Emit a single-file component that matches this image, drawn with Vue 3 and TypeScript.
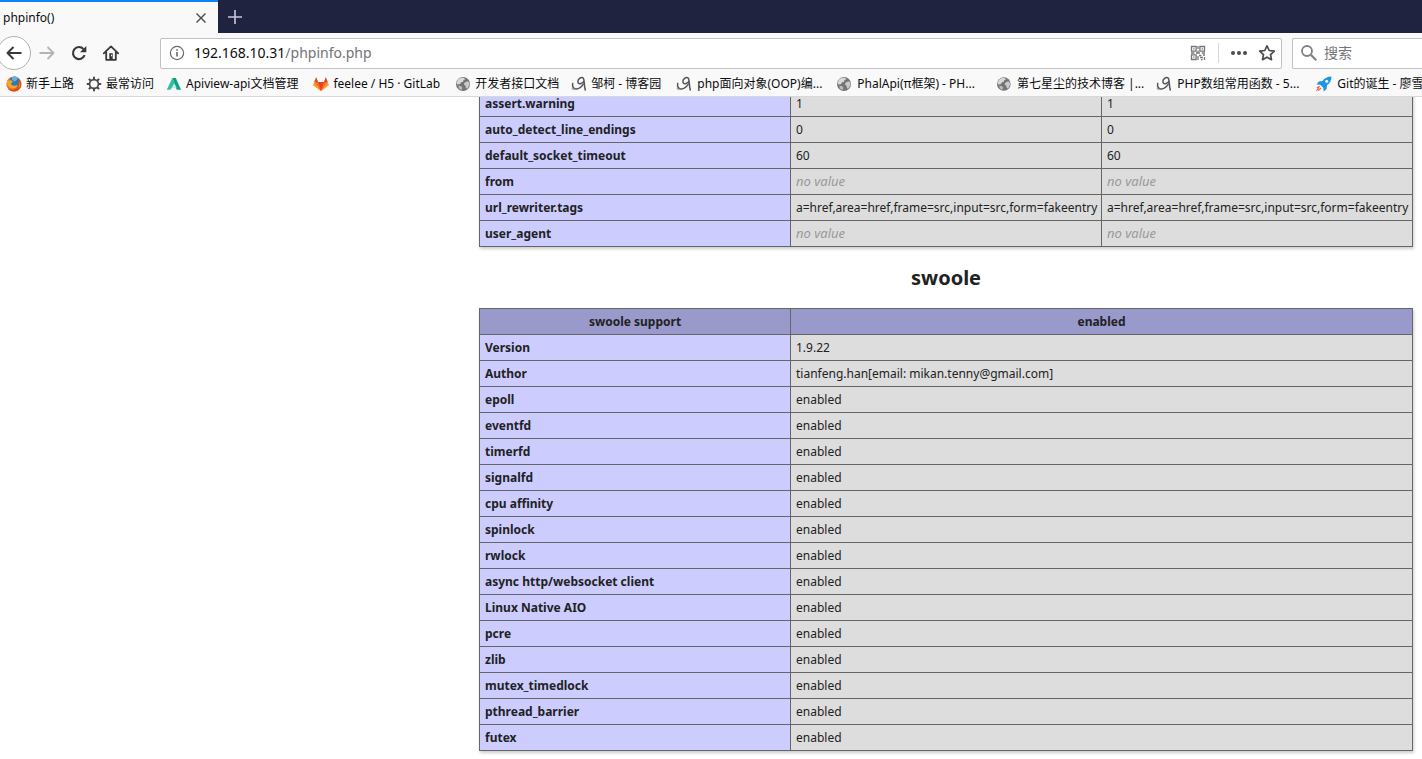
<script setup lang="ts">
interface Bookmark {
  icon: string
  label: string
  size?: string
}

const bookmarks: Bookmark[] = [
  { icon: 'firefox', label: '新手上路' },
  { icon: 'gear', label: '最常访问' },
  { icon: 'apiview', label: 'Apiview-api文档管理', size: 'mixed' },
  { icon: 'gitlab', label: 'feelee / H5 · GitLab', size: 'mixed' },
  { icon: 'globe', label: '开发者接口文档' },
  { icon: 'cnblogs', label: '邹柯 - 博客园', size: 'mixed' },
  { icon: 'cnblogs', label: 'php面向对象(OOP)编...', size: 'capped' },
  { icon: 'globe', label: 'PhalApi(π框架) - PH...', size: 'capped' },
  { icon: 'globe', label: '第七星尘的技术博客 |...', size: 'capped' },
  { icon: 'cnblogs', label: 'PHP数组常用函数 - 5...', size: 'capped' },
  { icon: 'rocket', label: 'Git的诞生 - 廖雪峰', size: 'capped' },
]

const tags = 'a=href,area=href,frame=src,input=src,form=fakeentry'

const directives: { name: string; value: string }[] = [
  { name: 'assert.warning', value: '1' },
  { name: 'auto_detect_line_endings', value: '0' },
  { name: 'default_socket_timeout', value: '60' },
  { name: 'from', value: '' },
  { name: 'url_rewriter.tags', value: tags },
  { name: 'user_agent', value: '' },
]

const features = [
  'epoll', 'eventfd', 'timerfd', 'signalfd', 'cpu affinity', 'spinlock', 'rwlock',
  'async http/websocket client', 'Linux Native AIO', 'pcre', 'zlib',
  'mutex_timedlock', 'pthread_barrier', 'futex',
]

const swoole: [string, string][] = [
  ['Version', '1.9.22'],
  ['Author', 'tianfeng.han[email: mikan.tenny@gmail.com]'],
  ...features.map((f): [string, string] => [f, 'enabled']),
]
</script>

<template>
  <div class="browser">
    <header class="chrome">
      <div class="tabs">
        <div class="tab">
          <span class="tab-title">phpinfo()</span>
          <button class="icon-btn close" aria-label="Close tab">
            <svg width="12" height="12" viewBox="0 0 12 12"><path d="M1.5 1.5l9 9M10.5 1.5l-9 9" stroke="#4a4a4d" stroke-width="1.4" fill="none" /></svg>
          </button>
        </div>
        <button class="icon-btn new-tab" aria-label="New tab">
          <svg width="14" height="14" viewBox="0 0 14 14"><path d="M7 0v14M0 7h14" stroke="#c9c9d6" stroke-width="1.6" fill="none" /></svg>
        </button>
      </div>

      <div class="toolbar">
        <nav class="nav">
          <button class="icon-btn back" aria-label="Back">
            <svg width="16" height="16" viewBox="0 0 16 16"><path d="M15.5 8H1.5M7.5 2L1.5 8l6 6" stroke="#38383d" stroke-width="2" fill="none" stroke-linejoin="round" /></svg>
          </button>
          <button class="icon-btn" aria-label="Forward">
            <svg width="16" height="16" viewBox="0 0 16 16"><path d="M.5 8h14M8.5 2l6 6-6 6" stroke="#b4b4b6" stroke-width="1.8" fill="none" stroke-linejoin="round" /></svg>
          </button>
          <button class="icon-btn" aria-label="Reload">
            <svg width="16" height="16" viewBox="0 0 16 16"><path d="M13.6 10.2A6 6 0 1 1 12.4 4" stroke="#38383d" stroke-width="2.1" fill="none" /><path d="M15.3 1v6.2H9z" fill="#38383d" /></svg>
          </button>
          <button class="icon-btn" aria-label="Home">
            <svg width="16" height="16" viewBox="0 0 16 16"><path d="M.8 8.4L8 1.4l7.2 7M3.2 7.5v7.3h9.6V7.5" stroke="#38383d" stroke-width="1.8" fill="none" stroke-linejoin="round" stroke-linecap="round" /><path d="M6.3 8.2h3.4v6.6H6.3z" fill="#38383d" /><path d="M8 9.7h1v1.6H8z" fill="#f9f9fa" /></svg>
          </button>
        </nav>
        <div class="url-box">
          <svg width="16" height="16" viewBox="0 0 16 16"><circle cx="8" cy="8" r="6.6" stroke="#6a6a6e" stroke-width="1.2" fill="none" /><path d="M8 7v4.6M8 4.2v1.6" stroke="#6a6a6e" stroke-width="1.6" /></svg>
          <a class="url" href="#">192.168.10.31<span>/phpinfo.php</span></a>
          <button class="icon-btn" aria-label="QR code">
            <svg width="16" height="16" viewBox="0 0 16 16" fill="none" stroke="#77777b" stroke-width="1.3">
              <path d="M1.5 1.5h4.6v4.6H1.5zM9.9 1.5h4.6v4.6H9.9zM1.5 9.9h4.6v4.6H1.5z" />
              <path d="M3.2 3.8h1.3M11.6 3.8h1.3M3.2 12.2h1.3M8 1v3M8 5.5v3M1 8h3.4M6 8h4M11.8 8H15M9 10.5h2.5M13 10h2M10 12.5h3M8 11v4M11 14.6h1.6M14.5 12v3" />
            </svg>
          </button>
          <span class="divider"></span>
          <button class="icon-btn" aria-label="Page actions">
            <svg width="18" height="16" viewBox="0 0 18 16" fill="#4b4b50"><circle cx="3" cy="8" r="2" /><circle cx="9" cy="8" r="2" /><circle cx="15" cy="8" r="2" /></svg>
          </button>
          <button class="icon-btn star" aria-label="Bookmark this page">
            <svg width="18" height="18" viewBox="0 0 18 18"><path d="M9 1.8l2.2 4.7 5.1.6-3.8 3.5 1 5.1L9 13.2l-4.5 2.5 1-5.1L1.7 7.1l5.1-.6z" stroke="#4b4b50" stroke-width="1.7" fill="none" stroke-linejoin="round" /></svg>
          </button>
        </div>
        <label class="search-box">
          <svg width="18" height="18" viewBox="0 0 18 18"><circle cx="7" cy="7" r="5" stroke="#808083" stroke-width="1.8" fill="none" /><path d="M10.8 10.8l5.4 5.4" stroke="#808083" stroke-width="2.2" /></svg>
          <input type="text" placeholder="搜索" aria-label="搜索" />
        </label>
      </div>

      <nav class="bookmarks">
        <a v-for="b in bookmarks" :key="b.label" href="#" class="bookmark" :class="b.size">
          <svg v-if="b.icon === 'firefox'" width="16" height="16" viewBox="0 0 16 16">
            <circle cx="8" cy="8" r="7.6" fill="#e8701a" />
            <circle cx="8.6" cy="6" r="5.4" fill="#2f78b8" />
            <path d="M6 1.2c2-.9 5-.6 6.600 1.100L9 5.500 6 4z" fill="#63b3df" />
            <path d="M.9 4.200C2 5 3 3.700 5.200 4.300l1.700 1.800-2 1.500c.5 2 3 3 5.200 1.600 1.400-.2 1.800.2 1.300 1C9 13.500 3 13.400 1.200 8.500z" fill="#f5a623" />
            <path d="M12.300 2.400c3.500 3 4 8.500.2 11.600C9 16.500 4 15.800 1.600 12.300c3 2 8 2.200 10-1.600 1.400-2.700 1.200-5.500.7-8.300z" fill="#d94f17" />
            <path d="M13.700 5.200c1 3 .3 6.200-2.200 7.900 2.100-2.500 2.400-5 2.200-7.900z" fill="#fbc02d" />
          </svg>
          <svg v-else-if="b.icon === 'gear'" width="16" height="16" viewBox="0 0 16 16" fill="none" stroke="#4a4a4e">
            <circle cx="8" cy="8" r="4.400" stroke-width="1.700" />
            <path d="M8 .8v2.600M8 12.600v2.600M.8 8h2.600M12.600 8h2.600M2.900 2.900l1.900 1.900M11.200 11.200l1.900 1.900M13.100 2.900l-1.900 1.900M4.800 11.200l-1.900 1.900" stroke-width="2" />
          </svg>
          <svg v-else-if="b.icon === 'apiview'" width="16" height="16" viewBox="0 0 16 16">
            <path d="M6.300 2h3.500L15 13.800h-4.300z" fill="#12a083" />
            <path d="M6.300 2l2.300 5.300L4.500 13.800H.8z" fill="#35bd9f" />
            <path d="M4.500 13.800c1-2.500 2.800-3.800 5.100-4.300l1.100 2.400c-2.500-.4-4.300.2-6.200 1.900z" fill="#b7e6dc" />
          </svg>
          <svg v-else-if="b.icon === 'gitlab'" width="16" height="16" viewBox="0 0 16 16">
            <path d="M8 15L.4 9.300 1.300 6h13.400l.9 3.300z" fill="#fc6d26" />
            <path d="M1.300 6L3.100 1l2 5zM14.700 6l-1.800-5-2 5z" fill="#e24329" />
            <path d="M8 15L5.100 6h5.800z" fill="#e24329" />
            <path d="M.4 9.300L1.300 6 8 15zM15.600 9.300L14.700 6 8 15z" fill="#fca326" />
          </svg>
          <svg v-else-if="b.icon === 'globe'" width="16" height="16" viewBox="0 0 16 16">
            <circle cx="8" cy="8" r="7" fill="#747474" />
            <path d="M3 3.600C4.500 2 7 1.500 9 2l1.500 1.300-2 .7-.4 1.700-2 .6-1 1.700-2.800.5L1.600 7z" fill="#d9d9d9" />
            <path d="M9.400 6.700l3-1.500 1.900 1.400.1 2.500-1.700 3.200-1.600.1-.7-2.700-1.500-1.300z" fill="#c9c9c9" />
            <path d="M3.300 9.600l3 .7 1.200 1.600-1.300 2.200-2.300-1.700z" fill="#bcbcbc" />
          </svg>
          <svg v-else-if="b.icon === 'cnblogs'" width="16" height="16" viewBox="0 0 16 16" fill="none" stroke="#55555a" stroke-width="1.500" stroke-linecap="round">
            <path d="M13 4.600C12.400 7.300 7.600 9.300 6.900 6.200 6.300 3.500 9.700.8 11.800 1.800c2 1 .9 6.400 2.500 12.200" />
            <path d="M1.700 7.500c-.4 2.600.2 4.700 2.300 5.300 3 .7 6.200-1.400 8.300-4.600" />
            <path d="M1.300 12.500l1.200 1" stroke="#aaaaae" />
          </svg>
          <svg v-else width="16" height="16" viewBox="0 0 16 16">
            <path d="M15.500.5C11.500.5 8.500 2 6.500 5L2.800 5.600.5 8.500l3.700.3 3 3 .6 3.700 2.900-2.700.3-3.500c3-2.200 4.500-4.800 4.500-8.800z" fill="#1e96dd" />
            <circle cx="10.700" cy="5.300" r="1.500" fill="#e9f6ff" />
            <path d="M3.700 10.300L.8 12M5.200 11.800L2.300 14.700M3 11.500L.5 14.800" stroke="#e8604f" stroke-width="1.200" />
          </svg>
          <span>{{ b.label }}</span>
        </a>
      </nav>
    </header>

    <main class="page">
      <div class="info">
        <table>
          <colgroup><col class="c-name" /><col class="c-val" /><col class="c-val" /></colgroup>
          <tbody>
            <tr v-for="d in directives" :key="d.name">
              <th scope="row">{{ d.name }}</th>
              <td v-for="n in 2" :key="n"><i v-if="!d.value">no value</i><template v-else>{{ d.value }}</template></td>
            </tr>
          </tbody>
        </table>
        <h2>swoole</h2>
        <table>
          <colgroup><col class="c-name" /><col /></colgroup>
          <thead>
            <tr><th scope="col">swoole support</th><th scope="col">enabled</th></tr>
          </thead>
          <tbody>
            <tr v-for="row in swoole" :key="row[0]">
              <th scope="row">{{ row[0] }}</th>
              <td>{{ row[1] }}</td>
            </tr>
          </tbody>
        </table>
      </div>
    </main>
  </div>
</template>

<style>
body {
  margin: 0;
  background: #fff;
  overflow: hidden;
}
</style>

<style scoped>
.browser {
  height: 100vh;
  display: flex;
  flex-direction: column;
  overflow: hidden;
  font: 12px/16px "Noto Sans", "Noto Sans CJK SC", sans-serif;
  color: #0c0c0d;
}
.chrome {
  flex: none;
  background: #f9f9fa;
  border-bottom: 1px solid #d8d8da;
}
.icon-btn {
  display: flex;
  align-items: center;
  justify-content: center;
  padding: 0;
  border: 0;
  background: none;
}
.tabs {
  display: flex;
  height: 33px;
  background: #202340;
}
.tab {
  box-sizing: border-box;
  width: 218px;
  display: flex;
  align-items: center;
  justify-content: space-between;
  padding: 0 11px 0 3px;
  background: #f9f9fa;
  border-top: 2px solid #0a84ff;
}
.new-tab {
  width: 34px;
}
.toolbar {
  display: flex;
  align-items: center;
  height: 40px;
}
.nav {
  display: flex;
  align-items: center;
  gap: 16px;
  width: 160px;
}
.back {
  box-sizing: border-box;
  width: 34px;
  height: 34px;
  margin: 0 -8px 0 -3px;
  border: 1px solid #b1b1b3;
  border-radius: 50%;
  background: #fff;
}
.url-box,
.search-box {
  box-sizing: border-box;
  display: flex;
  align-items: center;
  height: 31px;
  border: 1px solid #c2c2c4;
  border-radius: 2px;
  background: #fff;
}
.url-box {
  flex: 1;
  padding: 0 5px 0 8px;
}
.url {
  flex: 1;
  margin-left: 9px;
  font-size: 14px;
  line-height: 20px;
  color: #0c0c0d;
  text-decoration: none;
}
.url span {
  color: #737378;
}
.divider {
  width: 1px;
  height: 20px;
  margin: 0 11px 0 12px;
  background: #d7d7db;
}
.star {
  margin-left: 10px;
}
.search-box {
  width: 130px;
  margin-left: 10px;
  padding-left: 7px;
  border-right: 0;
  border-radius: 2px 0 0 2px;
}
.search-box input {
  flex: 1;
  min-width: 0;
  margin-left: 6px;
  padding: 0;
  border: 0;
  outline: 0;
  background: none;
  font: 14px/20px "Noto Sans", "Noto Sans CJK SC", sans-serif;
}
.search-box input::placeholder {
  color: #737378;
  opacity: 1;
}
.bookmarks {
  display: flex;
  gap: 12px;
  height: 23px;
  padding-left: 6px;
  overflow: hidden;
}
.bookmark {
  flex: none;
  display: flex;
  align-items: center;
  gap: 4px;
  height: 22px;
  color: #0c0c0d;
  white-space: nowrap;
  text-decoration: none;
}
.mixed {
  padding-right: 3px;
}
.capped {
  width: 148px;
  gap: 5px;
}
.page {
  flex: 1;
  min-height: 0;
  overflow: hidden;
}
.info {
  width: 934px;
  margin: -7px 9px 0 auto;
  color: #222;
}
table {
  width: 100%;
  table-layout: fixed;
  border-collapse: collapse;
  box-shadow: 1px 2px 3px #ccc;
}
.c-name,
.c-val {
  width: 311px;
}
th,
td {
  box-sizing: border-box;
  height: 26px;
  padding: 0 5px;
  border: 1px solid #666;
  line-height: 16px;
  text-align: left;
  white-space: nowrap;
}
th {
  background: #ccf;
  font-weight: 700;
}
thead th {
  background: #99c;
  text-align: center;
}
td {
  background: #ddd;
}
td i {
  font-size: 13px;
  color: #999;
}
h2 {
  margin: 19px 0 18px;
  font-size: 20px;
  line-height: 24px;
  font-weight: 700;
  text-align: center;
}
</style>
